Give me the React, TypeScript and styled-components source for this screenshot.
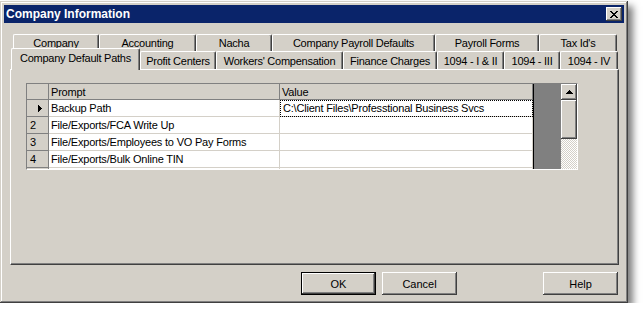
import React from "react";
import styled, { createGlobalStyle, css } from "styled-components";

const Global = createGlobalStyle`
  html, body { margin: 0; padding: 0; background: #ffffff; }
  body {
    font-family: "Liberation Sans", Arial, sans-serif;
    font-size: 11px;
    color: #000;
  }
`;

const raised = css`
  box-shadow: inset -1px -1px #404040, inset 1px 1px #ffffff,
    inset -2px -2px #808080, inset 2px 2px #d4d0c8;
`;

const Window = styled.div`
  margin-top: 1px;
  width: 628px;
  height: 302px;
  box-sizing: border-box;
  padding: 4px;
  background: #d4d0c8;
  display: flex;
  flex-direction: column;
  box-shadow: inset -1px -1px #404040, inset 1px 1px #d4d0c8,
    inset -2px -2px #808080, inset 2px 2px #ffffff,
    5px 5px 7px rgba(0, 0, 0, 0.5);
`;

const TitleBar = styled.div`
  height: 18px;
  flex: none;
  background: #0a246a;
  color: #fff;
  display: flex;
  align-items: center;
  justify-content: space-between;
  padding: 0 2px;
  font-weight: bold;
  font-size: 12px;
`;

const CloseButton = styled.div`
  width: 16px;
  height: 14px;
  background: #d4d0c8;
  ${raised};
  display: flex;
  align-items: center;
  justify-content: center;
`;

const Body = styled.div`
  display: flex;
  flex-direction: column;
  padding: 0 5px 0 6px;
`;

const TabArea = styled.div`
  margin-top: 11px;
  display: flex;
  flex-direction: column;
`;

const TabRow = styled.div<{ $indent: number; $h: number; $overlap?: number }>`
  display: flex;
  align-items: flex-end;
  height: ${(p) => p.$h}px;
  padding-left: ${(p) => p.$indent}px;
  margin-top: ${(p) => -(p.$overlap ?? 0)}px;
`;

const Tab = styled.div<{ $w: number; $h: number; $active?: boolean }>`
  width: ${(p) => p.$w}px;
  height: ${(p) => p.$h}px;
  flex: none;
  box-sizing: border-box;
  background: #d4d0c8;
  border-top: 1px solid #ffffff;
  border-left: 1px solid #ffffff;
  border-right: 1px solid #404040;
  border-radius: 2px 2px 0 0;
  box-shadow: inset -1px 0 #808080;
  display: flex;
  align-items: center;
  justify-content: center;
  white-space: nowrap;
  letter-spacing: -0.25px;
  ${(p) =>
    p.$active &&
    css`
      position: relative;
      z-index: 1;
      margin-bottom: -1px;
      padding-bottom: 3px;
    `}
`;

const Panel = styled.div`
  height: 196px;
  box-sizing: border-box;
  border-top: 1px solid #ffffff;
  border-left: 1px solid #ffffff;
  border-right: 1px solid #404040;
  border-bottom: 1px solid #404040;
  box-shadow: inset -1px -1px #808080;
  padding: 13px 0 0 15px;
`;

const GridFrame = styled.div`
  display: flex;
  width: 552px;
  height: 87px;
  box-sizing: border-box;
  border-top: 1px solid #808080;
  border-left: 1px solid #808080;
  border-right: 1px solid #ffffff;
  border-bottom: 1px solid #ffffff;
`;

const Table = styled.div`
  display: grid;
  grid-template-columns: 22px 231px 253px;
  grid-template-rows: 16px;
  grid-auto-rows: 17px;
  height: 85px;
  overflow: hidden;
  flex: none;
`;

const Cell = styled.div<{ $head?: boolean; $focus?: boolean; $pad?: number }>`
  box-sizing: border-box;
  display: flex;
  align-items: center;
  white-space: nowrap;
  overflow: hidden;
  letter-spacing: -0.2px;
  padding-left: ${(p) => p.$pad ?? 2}px;
  background: ${(p) => (p.$head ? "#d4d0c8" : "#ffffff")};
  border-right: 1px solid ${(p) => (p.$head ? "#808080" : "#d4d0c8")};
  border-bottom: 1px solid ${(p) => (p.$head ? "#808080" : "#d4d0c8")};
  ${(p) =>
    p.$focus &&
    css`
      outline: 1px dotted #000;
      outline-offset: -1px;
    `}
`;

const Filler = styled.div`
  width: 28px;
  flex: none;
  box-sizing: border-box;
  background: #808080;
  border-left: 1px solid #000;
`;

const ScrollBar = styled.div`
  width: 16px;
  flex: none;
  display: flex;
  flex-direction: column;
`;

const ScrollButton = styled.div<{ $h: number }>`
  height: ${(p) => p.$h}px;
  flex: none;
  background: #d4d0c8;
  ${raised};
  display: flex;
  align-items: center;
  justify-content: center;
`;

const Track = styled.div`
  flex: 1;
  background-image: repeating-conic-gradient(#ffffff 0 25%, #d4d0c8 0 50%);
  background-size: 2px 2px;
`;

const ButtonRow = styled.div`
  display: flex;
  justify-content: flex-end;
  gap: 6px;
  margin-top: 7px;
  padding-right: 1px;
`;

const Button = styled.div<{ $default?: boolean; $push?: number }>`
  width: 75px;
  height: 23px;
  box-sizing: border-box;
  margin-left: ${(p) => p.$push ?? 0}px;
  background: #d4d0c8;
  display: flex;
  align-items: center;
  justify-content: center;
  ${(p) =>
    p.$default
      ? css`
          border: 1px solid #000;
          box-shadow: inset -1px -1px #404040, inset 1px 1px #ffffff,
            inset -2px -2px #808080;
        `
      : raised};
`;

const CloseGlyph = () => (
  <svg width="8" height="7" viewBox="0 0 8 7" shapeRendering="crispEdges">
    <path
      d="M0 0h2v1H0zM6 0h2v1H6zM1 1h2v1H1zM5 1h2v1H5zM2 2h4v1H2zM3 3h2v1H3zM2 4h4v1H2zM1 5h2v1H1zM5 5h2v1H5zM0 6h2v1H0zM6 6h2v1H6z"
      fill="#000"
    />
  </svg>
);

const RowArrow = () => (
  <svg width="4" height="7" viewBox="0 0 4 7" shapeRendering="crispEdges">
    <path d="M0 0h1v7H0zM1 1h1v5H1zM2 2h1v3H2zM3 3h1v1H3z" fill="#000" />
  </svg>
);

const UpArrow = () => (
  <svg width="7" height="4" viewBox="0 0 7 4" shapeRendering="crispEdges">
    <path d="M3 0h1v1H3zM2 1h3v1H2zM1 2h5v1H1zM0 3h7v1H0z" fill="#000" />
  </svg>
);

const row1 = [
  { label: "Company", w: 86 },
  { label: "Accounting", w: 97 },
  { label: "Nacha", w: 76 },
  { label: "Company Payroll Defaults", w: 163 },
  { label: "Payroll Forms", w: 104 },
  { label: "Tax Id's", w: 78 },
];

const row2 = [
  { label: "Company Default Paths", w: 129, active: true },
  { label: "Profit Centers", w: 76 },
  { label: "Workers' Compensation", w: 127 },
  { label: "Finance Charges", w: 94 },
  { label: "1094 - I & II", w: 67 },
  { label: "1094 - III", w: 56 },
  { label: "1094 - IV", w: 58 },
];

const rows = [
  { prompt: "Backup Path", value: "C:\\Client Files\\Professtional Business Svcs" },
  { prompt: "File/Exports/FCA Write Up", value: "" },
  { prompt: "File/Exports/Employees to VO Pay Forms", value: "" },
  { prompt: "File/Exports/Bulk Online TIN", value: "" },
  { prompt: "", value: "" },
];

export default function App() {
  return (
    <>
      <Global />
      <Window>
        <TitleBar>
          <span>Company Information</span>
          <CloseButton>
            <CloseGlyph />
          </CloseButton>
        </TitleBar>
        <Body>
          <TabArea>
            <TabRow $indent={3} $h={17}>
              {row1.map((t) => (
                <Tab key={t.label} $w={t.w} $h={17}>
                  {t.label}
                </Tab>
              ))}
            </TabRow>
            <TabRow $indent={1} $h={21} $overlap={3}>
              {row2.map((t) => (
                <Tab key={t.label} $w={t.w} $h={t.active ? 22 : 18} $active={t.active}>
                  {t.label}
                </Tab>
              ))}
            </TabRow>
          </TabArea>
          <Panel>
            <GridFrame>
              <Table>
                <Cell $head />
                <Cell $head>Prompt</Cell>
                <Cell $head>Value</Cell>
                {rows.map((r, i) => (
                  <React.Fragment key={i}>
                    <Cell $head $pad={i === 0 ? 11 : 3}>
                      {i === 0 ? <RowArrow /> : i < 4 ? String(i + 1) : ""}
                    </Cell>
                    <Cell>{r.prompt}</Cell>
                    <Cell $focus={i === 0} $pad={3}>
                      {r.value}
                    </Cell>
                  </React.Fragment>
                ))}
              </Table>
              <Filler />
              <ScrollBar>
                <ScrollButton $h={16}>
                  <UpArrow />
                </ScrollButton>
                <ScrollButton $h={39} />
                <Track />
              </ScrollBar>
            </GridFrame>
          </Panel>
          <ButtonRow>
            <Button $default>OK</Button>
            <Button>Cancel</Button>
            <Button $push={80}>Help</Button>
          </ButtonRow>
        </Body>
      </Window>
    </>
  );
}
